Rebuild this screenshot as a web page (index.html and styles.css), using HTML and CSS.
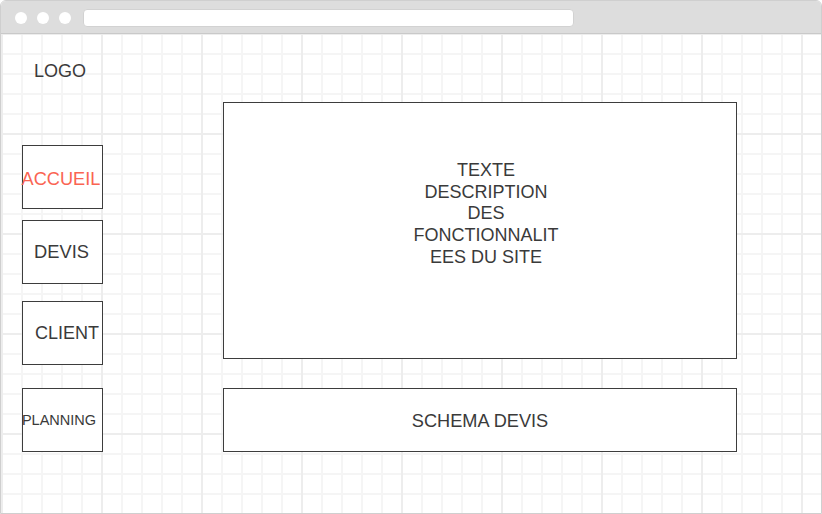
FILE: index.html
```html
<!DOCTYPE html>
<html lang="fr">
<head>
<meta charset="utf-8">
<title>Maquette</title>
<link rel="stylesheet" href="styles.css">
</head>
<body>
<div class="window">
  <div class="titlebar">
    <span class="dot"></span>
    <span class="dot"></span>
    <span class="dot"></span>
    <div class="url"></div>
  </div>
  <div class="canvas">
    <aside class="sidebar">
      <div class="logo">LOGO</div>
      <nav class="nav">
        <div class="nav-item nav-item--active">ACCUEIL</div>
        <div class="nav-item nav-item--devis">DEVIS</div>
        <div class="nav-item nav-item--client">CLIENT</div>
        <div class="nav-item nav-item--planning">PLANNING</div>
      </nav>
    </aside>
    <main class="main">
      <div class="panel panel--desc">
        <p class="desc-text">TEXTE<br>DESCRIPTION<br>DES<br>FONCTIONNALIT<br>EES DU SITE</p>
      </div>
      <div class="panel panel--schema">SCHEMA DEVIS</div>
    </main>
  </div>
</div>
</body>
</html>
```

FILE: styles.css
```css
* { box-sizing: border-box; }

html, body {
  margin: 0;
  padding: 0;
  background: #ffffff;
}

body {
  font-family: "Liberation Sans", Arial, Helvetica, sans-serif;
  color: #333333;
}

.window {
  width: 822px;
  height: 514px;
  border: 1px solid #cfcfcf;
  border-radius: 6px 6px 0 0;
  overflow: hidden;
  display: flex;
  flex-direction: column;
}

.titlebar {
  height: 33px;
  flex: 0 0 33px;
  background: #dddddd;
  border-bottom: 1px solid #c9c9c9;
  display: flex;
  align-items: flex-start;
  padding: 11px 0 0 14px;
  gap: 10px;
}

.dot {
  width: 12px;
  height: 12px;
  border-radius: 50%;
  background: #ffffff;
  flex: 0 0 12px;
}

.url {
  width: 491px;
  height: 18px;
  margin-top: -3px;
  margin-left: 2px;
  background: #ffffff;
  border-radius: 4px;
  border: 1px solid #d2d2d2;
}

.canvas {
  flex: 1;
  display: flex;
  align-items: flex-start;
  background-color: #ffffff;
  background-image:
    linear-gradient(to right, #ededed 0, #ededed 2px, transparent 2px),
    linear-gradient(to bottom, #ededed 0, #ededed 2px, transparent 2px),
    linear-gradient(to right, #f5f5f5 0, #f5f5f5 2px, transparent 2px),
    linear-gradient(to bottom, #f5f5f5 0, #f5f5f5 2px, transparent 2px);
  background-size: 100px 100px, 100px 100px, 20px 20px, 20px 20px;
  background-position: 0 -1px, 0 -1px, 0 -1px, 0 -1px;
}

.sidebar {
  padding-left: 21px;
  width: 102px;
  flex: 0 0 102px;
}

.logo {
  margin-top: 27px;
  padding-left: 12px;
  font-size: 18px;
  line-height: 20px;
  color: #3a3a3a;
}

.nav {
  margin-top: 64px;
  display: flex;
  flex-direction: column;
}

.nav-item {
  width: 81px;
  height: 64px;
  border: 1px solid #3d3d3d;
  background: #ffffff;
  display: flex;
  align-items: center;
  justify-content: center;
  font-size: 18px;
  line-height: 20px;
  color: #3a3a3a;
  white-space: nowrap;
}

.nav-item--active {
  color: #fa6452;
  font-size: 18.2px;
  padding-top: 3px;
  padding-right: 3px;
}

.nav-item--devis {
  margin-top: 11px;
  font-size: 18.3px;
  padding-right: 2px;
}

.nav-item--client {
  margin-top: 17px;
  padding-left: 9px;
}

.nav-item--planning {
  margin-top: 23px;
  font-size: 14.5px;
  padding-right: 7px;
}

.main {
  margin-left: 120px;
  margin-top: 68px;
  display: flex;
  flex-direction: column;
}

.panel {
  width: 514px;
  border: 1px solid #3d3d3d;
  background: #ffffff;
  color: #3a3a3a;
  font-size: 18px;
}

.panel--desc {
  height: 257px;
  padding: 57px 0 0 12px;
}

.desc-text {
  margin: 0;
  text-align: center;
  line-height: 21.7px;
}

.panel--schema {
  margin-top: 29px;
  height: 64px;
  display: flex;
  align-items: center;
  justify-content: center;
  padding-top: 1px;
  line-height: 20px;
  font-size: 18.2px;
}
```
